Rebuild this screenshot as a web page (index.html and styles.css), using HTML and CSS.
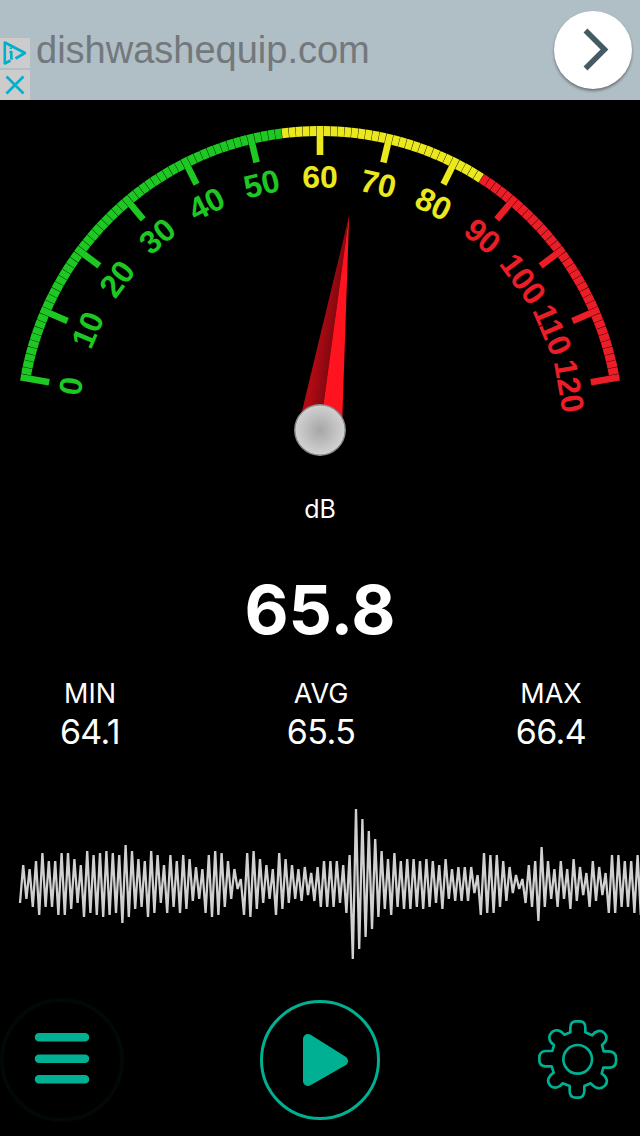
FILE: index.html
```html
<!DOCTYPE html>
<html lang="en">
<head>
  <meta charset="UTF-8" />
  <meta name="viewport" content="width=device-width, initial-scale=1.0" />
  <title>Sound Meter</title>
  <link rel="stylesheet" href="styles.css">
</head>
<body>
  <div class="ad">
    <div class="ad-badges">
      <svg class="badge" viewBox="0 0 30 30">
        <path d="M10.5 22.5 L4.8 25.5 V4.5 L25 15 L15.5 20.5" />
        <path d="M10.8 9.5 V11 M9.5 14 H11.3 V20.5 H12.8" />
      </svg>
      <svg class="badge" viewBox="0 0 30 30">
        <path d="M6.5 6.5 L23.5 23.5 M23.5 6.5 L6.5 23.5" />
      </svg>
    </div>
    <span class="ad-text">dishwashequip.com</span>
    <div class="ad-go">
      <svg viewBox="0 0 78 78"><path d="M31.5 19.5 L50.5 38.5 L31.5 57.5" /></svg>
    </div>
  </div>

  <svg class="gauge" viewBox="0 100 640 390">
    <defs>
      <linearGradient id="shade" x1="0" x2="1">
        <stop offset="0.3" stop-color="#b20a13" />
        <stop offset="1" stop-color="#850810" />
      </linearGradient>
      <radialGradient id="metal">
        <stop offset="0" stop-color="#a6a6a6" />
        <stop offset="1" stop-color="#d2d2d2" />
      </radialGradient>
    </defs>
    <g id="dial"></g>
    <g id="needle">
      <polygon points="0,-217 -22,0 0,0" fill="url(#shade)" />
      <polygon points="0,-217 22,0 0,0" fill="#ff131f" />
    </g>
    <circle cx="320" cy="430" r="25.2" fill="url(#metal)" stroke="#8d8d8d" stroke-width="1.4" />
  </svg>

  <div class="unit">dB</div>
  <div class="level">65.8</div>

  <div class="stats">
    <div class="stat"><span>MIN</span><b>64.1</b></div>
    <div class="stat"><span>AVG</span><b>65.5</b></div>
    <div class="stat"><span>MAX</span><b>66.4</b></div>
  </div>

  <svg class="wave" viewBox="0 0 640 180"><polyline id="wave" /></svg>

  <div class="controls">
    <svg class="menu" viewBox="0 0 124 124">
      <circle cx="62" cy="62" r="60" />
      <path d="M39 39.3 H85 M39 60.8 H85 M39 81.3 H85" />
    </svg>
    <svg class="play" viewBox="0 0 120 120">
      <circle cx="60" cy="60" r="58.5" />
      <path d="M48 39 L83 61 L48 81 Z" />
    </svg>
    <svg class="gear" viewBox="0 0 360 360">
      <circle cx="173" cy="178" r="43" />
      <path d="M151 97 V83 Q151 64 168 64 H180 Q196 64 196 83 V97 L216 106
        C227 92 241 89 252 98 C264 109 261 124 246 135 L251 154 H268
        Q288 156 288 174 V184 Q287 202 268 203 H250 L245 221
        C263 232 264 246 255 257 C243 269 227 267 212 250 L193 258 V273
        Q192 293 176 293 H166 Q149 292 149 273 V258 L128 250
        C117 264 103 267 91 257 C80 245 82 232 101 218 L95 199 H76
        Q58 198 58 181 V173 Q58 155 76 153 H97 L102 135
        C86 124 84 108 95 97 C107 87 121 89 133 104 Z" />
    </svg>
  </div>

  <script>
    const NS = "http://www.w3.org/2000/svg";
    const dial = document.getElementById("dial");
    const step = 160 / 120;

    function add(name, attrs, parent) {
      const el = document.createElementNS(NS, name);
      for (const key in attrs) el.setAttribute(key, attrs[key]);
      parent.appendChild(el);
      return el;
    }

    function zone(db) {
      if (db < 55) return "low";
      return db < 85 ? "mid" : "high";
    }

    for (let db = 0; db <= 120; db++) {
      const major = db % 10 === 0;
      const g = add("g", {
        class: zone(db),
        transform: `translate(320 430) rotate(${(db - 60) * step})`
      }, dial);
      if (major) {
        add("rect", { x: -3.3, y: -304, width: 6.6, height: 29 }, g);
        add("text", { x: 0, y: -242 }, g).textContent = db;
      } else {
        add("polygon", { points: "-3.35,-304 3.35,-304 3.25,-294 -3.25,-294" }, g);
      }
    }

    const level = 65.8;
    document.getElementById("needle").setAttribute("transform",
      `translate(320 430) rotate(${(level - 60) * step})`);

    // alternating peaks and troughs, 2px per unit
    const samples = [
      54, 35,52, 37,56, 33,60, 29,56, 33,56, 33,60, 29,60, 29,57, 32,54, 35,61,
      28,59, 30,60, 29,61, 28,60, 29,59, 30,64, 25,61, 28,57, 32,56, 33,61,
      28,59, 30,54, 35,59, 30,56, 33,59, 30,57, 32,53, 36,52, 37,59, 30,61,
      28,60, 29,56, 33,52, 37,47, 42,60, 29,61, 28,57, 32,54, 35,52, 37,60,
      29,57, 32,54, 35,52, 37,53, 36,50, 39,53, 36,56, 33,56, 33,56, 33,54,
      35,59, 30,82, 7,77, 12,71, 18,67, 22,61, 28,57, 32,60, 29,56, 33,57,
      32,57, 32,56, 33,57, 32,56, 33,54, 35,57, 32,52, 37,53, 36,53, 36,53,
      36,49, 40,60, 29,59, 30,59, 30,56, 33,53, 36,49, 40,47, 42,54, 35,56,
      33,63, 26,56, 33,52, 37,56, 33,52, 37,57, 32,53, 36,50, 39,56, 33,53,
      36,50, 39,59, 30,59, 30,56, 33,56, 33,59, 30,60
    ];
    document.getElementById("wave").setAttribute("points",
      samples.map((v, i) => `${(20 + i * 3.2).toFixed(1)},${v * 2}`).join(" "));
  </script>
</body>
</html>
```
FILE: styles.css
```css
body {
  margin: 0;
  width: 640px;
  height: 1136px;
  overflow: hidden;
  background: #000;
  color: #fff;
  font-family: Inter, "Liberation Sans", sans-serif;
  display: flex;
  flex-direction: column;
}
svg {
  display: block;
}
.ad {
  height: 100px;
  background: #b0bec5;
  display: flex;
  align-items: center;
}
.ad-badges {
  align-self: flex-end;
  display: flex;
  flex-direction: column;
  gap: 2px;
}
.badge {
  width: 30px;
  height: 30px;
  background: #ccc;
  fill: none;
  stroke: #00aecd;
  stroke-width: 2.6;
  stroke-linejoin: round;
}
.ad-text {
  flex: 1;
  padding-left: 6px;
  font-family: "Liberation Sans", Arial, sans-serif;
  font-size: 38px;
  line-height: 44px;
  color: #72787c;
}
.ad-go {
  width: 78px;
  height: 78px;
  margin-right: 8px;
  border-radius: 50%;
  background: #fff;
  box-shadow: 0 2px 3px rgba(0,0,0,0.4);
}
.ad-go path {
  fill: none;
  stroke: #455a64;
  stroke-width: 5.5;
}
.gauge {
  width: 640px;
  height: 390px;
}
.gauge text {
  font: bold 32px "Liberation Sans", Arial, sans-serif;
  text-anchor: middle;
}
.low {
  fill: #1ec823;
}
.mid {
  fill: #ebe81e;
}
.high {
  fill: #eb1e28;
}
.unit {
  text-align: center;
  font-size: 25px;
  line-height: 38px;
}
.level {
  margin-top: 40px;
  text-align: center;
  font-size: 68px;
  line-height: 82px;
  font-weight: bold;
}
.stats {
  margin-top: 27px;
  display: flex;
  justify-content: space-between;
}
.stat {
  width: 180px;
  display: flex;
  flex-direction: column;
  align-items: center;
}
.stat:last-child {
  width: 178px;
}
.stat span {
  font-size: 27px;
  line-height: 34px;
}
.stat b {
  font-size: 34px;
  line-height: 41px;
  font-weight: normal;
  letter-spacing: -0.6px;
}
.wave {
  width: 640px;
  height: 180px;
  margin-top: 43px;
}
.wave polyline {
  fill: none;
  stroke: #d0d0d0;
  stroke-width: 2.3;
  stroke-linejoin: bevel;
}
.controls {
  margin-top: 23px;
  display: flex;
  align-items: center;
  justify-content: space-between;
  stroke-linecap: round;
  stroke-linejoin: round;
  fill: none;
  stroke: #00b092;
}
.menu {
  width: 124px;
  height: 124px;
}
.menu circle {
  stroke: #010807;
  stroke-width: 4;
}
.menu path {
  stroke-width: 8.5;
}
.play {
  width: 120px;
  height: 120px;
  margin-right: 4px;
}
.play circle {
  stroke-width: 3;
}
.play path {
  fill: #00b092;
  stroke-width: 10;
}
.gear {
  width: 120px;
  height: 120px;
}
.gear circle,
.gear path {
  stroke-width: 8;
}
```
